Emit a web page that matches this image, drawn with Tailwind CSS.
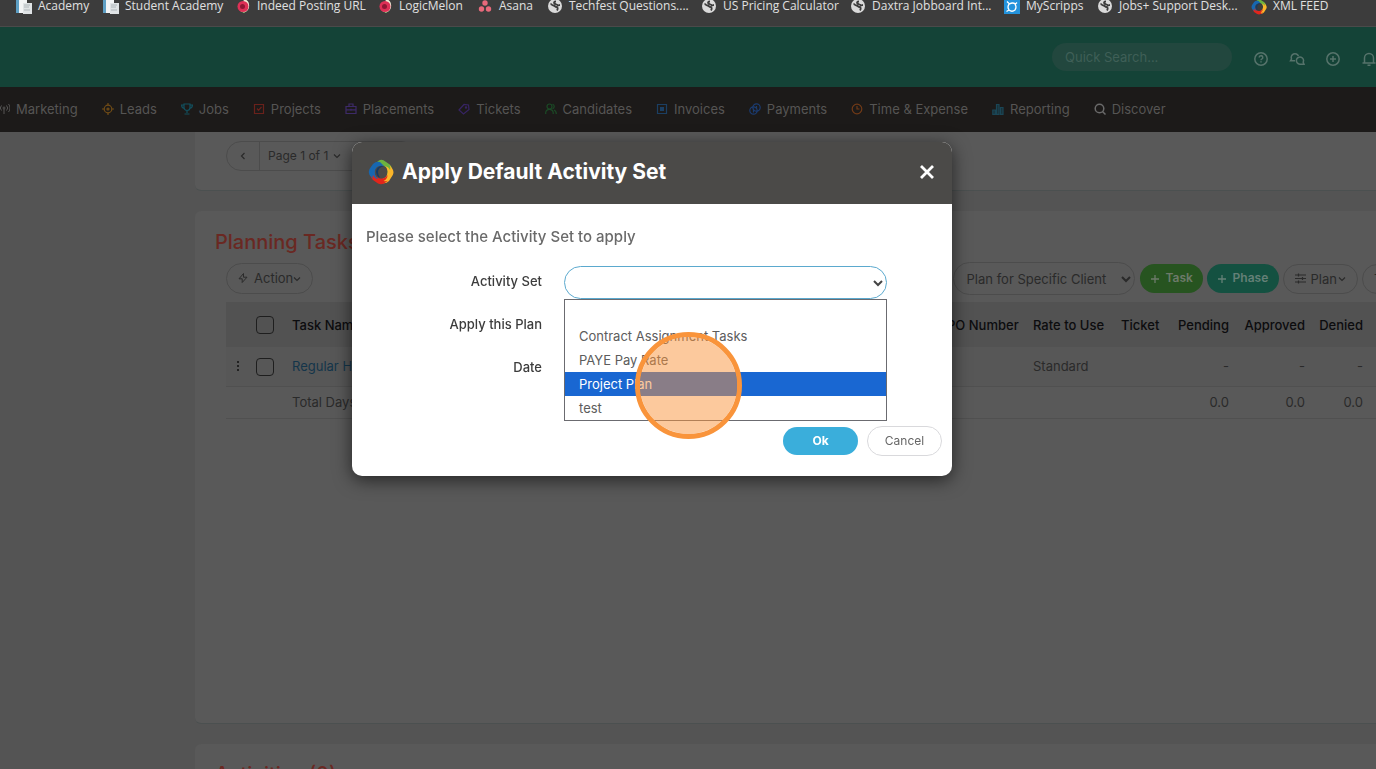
<!DOCTYPE html>
<html lang="en">
<head>
  <meta charset="UTF-8" />
  <meta name="viewport" content="width=device-width, initial-scale=1.0" />
  <title>Planning Tasks</title>
  <script src="https://cdn.jsdelivr.net/npm/@tailwindcss/browser@4"></script>
</head>
<body class="h-screen overflow-hidden flex flex-col bg-[#545454] font-['Inter',sans-serif] text-[13px] leading-5 text-[#2a2a2a]">

  <!-- shared icon shapes -->
  <svg class="hidden" aria-hidden="true">
    <symbol id="page" viewBox="0 0 16 16">
      <path d="M0 0h6v14H0z" fill="#5e9fc4" /><path d="M3 0h8v14H3z" fill="#f2f4f5" /><path d="M7 4h9v11H7z" fill="#dfe3e5" />
      <path d="M8 6h6M8 8h5M8 11h6" stroke="#aeb6ba" />
    </symbol>
    <symbol id="melon" viewBox="0 0 16 16">
      <path d="M10 0a8 8 0 0 1-1 14l-4-2z" fill="#5f9a45" /><path d="M9 0a7 7 0 0 1 0 13.500l-3-1z" fill="#f1ead6" />
      <circle cx="8" cy="7.500" r="5.500" fill="#dd3056" /><circle cx="7.500" cy="7.500" r="2.500" fill="#8e1734" />
    </symbol>
    <symbol id="globe" viewBox="0 0 16 16">
      <circle cx="8" cy="7" r="7" fill="#dadada" />
      <path d="M3.500 5c1 0 1.500 1.500 3 1.500S8 8 9.500 8s1.500 2 .5 3.500M9 2.500c-2 0-2.500 1-1.500 2s2 .5 3 1.500 1.500 0 2.500 0" fill="none" stroke="#3c3c3c" stroke-width="1.800" />
    </symbol>
    <symbol id="swirl" viewBox="0 0 26 26">
      <path d="M5 6 11 1.500q2-1.200 4.500-.2L21 5q3 2 3 6l-5 5q2-7-3-9-6-3-9 1z" fill="#6cb33f" />
      <path d="M21 5l3.500 5q1.800 3 .3 6L21 22q-3 3-7 2l-4-4q7 1 9-4 2-6-2-9 4 1 5 4 1-3-1-6z" fill="#fbb62a" />
      <path d="M21 21l-5 3.500q-3 1.500-6 0L5 21q-3-3-2.500-7l4-4q-1 7 4 9 6 2 9-3 0 4-4 6 3 1 5.500-1z" fill="#e1251b" />
      <path d="M5 20l-3.500-4q-1.500-3 0-6L5 5q3-3 7-2l4 4q-7-1-9 4-1 6 3 9-3 0-5-4-1 2 0 4z" fill="#1767b0" />
      <path d="M8 12q1-4 5-5l3 .3q-6 1-6 6 0 3 2 5.500-4-1.500-4-6.800z" fill="#143a66" />
    </symbol>
    <symbol id="chevron" viewBox="0 0 8 8"><path d="M1 2.500 4 5.500 7 2.500" fill="none" stroke="currentColor" stroke-width="1.200" /></symbol>
  </svg>

  <!-- bookmarks bar -->
  <nav aria-label="Bookmarks" class="h-[27px] shrink-0 flex items-start overflow-hidden bg-[#3c3c3c] border-b border-[#4a4a4a] pl-4 font-['Open_Sans',sans-serif] text-xs leading-3 text-[#e0e0e0] whitespace-nowrap">
    <a href="#" class="w-[87px] shrink-0 flex gap-[6px]"><svg class="size-4 -mt-px shrink-0"><use href="#page" /></svg>Academy</a>
    <a href="#" class="w-[132px] shrink-0 flex gap-[6px]"><svg class="size-4 -mt-px shrink-0"><use href="#page" /></svg>Student Academy</a>
    <a href="#" class="w-[142px] shrink-0 flex gap-[6px]"><svg class="size-4 -mt-px shrink-0"><use href="#melon" /></svg>Indeed Posting URL</a>
    <a href="#" class="w-[100px] shrink-0 flex gap-[6px]"><svg class="size-4 -mt-px shrink-0"><use href="#melon" /></svg>LogicMelon</a>
    <a href="#" class="w-[70px] shrink-0 flex gap-[6px]"><svg class="size-4 -mt-px shrink-0" viewBox="0 0 16 16" fill="#e8697b"><circle cx="8" cy="4" r="2.700" /><circle cx="4.500" cy="10" r="2.700" /><circle cx="11.500" cy="10" r="2.700" /></svg>Asana</a>
    <a href="#" class="w-[154px] shrink-0 flex gap-[6px]"><svg class="size-4 -mt-px shrink-0"><use href="#globe" /></svg>Techfest Questions....</a>
    <a href="#" class="w-[149px] shrink-0 flex gap-[6px]"><svg class="size-4 -mt-px shrink-0"><use href="#globe" /></svg>US Pricing Calculator</a>
    <a href="#" class="w-[154px] shrink-0 flex gap-[6px]"><svg class="size-4 -mt-px shrink-0"><use href="#globe" /></svg>Daxtra Jobboard Int...</a>
    <a href="#" class="w-[93px] shrink-0 flex gap-[6px]"><svg class="size-4 -mt-px shrink-0" viewBox="0 0 16 16"><path d="M0 0h16v15H0z" fill="#2393dc" /><path d="M3 2.500 5.500 5q3-2 6 0L13 3.500M5 5q-2 3 0 6 3 2.500 6 0 2-3 0-6M2.500 12.500 5 11" fill="none" stroke="#fff" stroke-width="1.300" /></svg>MyScripps</a>
    <a href="#" class="w-[154px] shrink-0 flex gap-[6px]"><svg class="size-4 -mt-px shrink-0"><use href="#globe" /></svg>Jobs+ Support Desk...</a>
    <a href="#" class="shrink-0 flex gap-[6px]"><svg class="size-4 -mt-px shrink-0"><use href="#swirl" /></svg>XML FEED</a>
  </nav>

  <!-- app header -->
  <header class="h-[60px] shrink-0 flex items-center justify-end gap-[22px] bg-[#144337] text-[#56736b]">
    <input type="search" aria-label="Quick Search" placeholder="Quick Search..." class="w-[180px] h-7 rounded-full bg-[#22473e] px-[13px] text-[13px] placeholder:text-[#3f5f57] outline-none" />
    <button aria-label="Help"><svg class="size-[14px] mt-1" viewBox="0 0 14 14" fill="none" stroke="currentColor" stroke-width="1.500"><circle cx="7" cy="7" r="6.200" /><path d="M5.200 5.500a1.800 1.800 0 1 1 2.500 1.600q-.7.300-.7 1.200M7 9.300v1.300" /></svg></button>
    <button aria-label="Messages"><svg class="size-[14px] mt-1 overflow-visible" viewBox="0 0 14 14" fill="none" stroke="currentColor" stroke-width="1.500"><path d="M5 8.800H.5l1-1.800A3.800 3.800 0 1 1 8.500 4" /><path d="M14 12.200H9.800a3.600 3.600 0 1 1 3.400-2z" /></svg></button>
    <button aria-label="Add"><svg class="size-[14px] mt-1" viewBox="0 0 14 14" fill="none" stroke="currentColor" stroke-width="1.500"><circle cx="7" cy="7" r="6.200" /><path d="M7 4v6M4 7h6" /></svg></button>
    <button aria-label="Notifications"><svg class="size-[14px] mt-1" viewBox="0 0 14 14" fill="none" stroke="currentColor" stroke-width="1.500"><path d="M.5 11h13M2.500 11V6a4.500 4.500 0 0 1 9 0v5M5.500 13.300h3" /></svg></button>
  </header>

  <!-- main navigation -->
  <nav aria-label="Main" class="h-[45px] shrink-0 flex items-center gap-6 overflow-hidden bg-[#1c1a19] text-[#565554] whitespace-nowrap pb-[2px]">
    <a href="#" class="flex items-center gap-[6px] -ml-[2px]"><svg class="size-3" viewBox="0 0 12 12" fill="none" stroke="currentColor"><circle cx="6" cy="5" r="1" /><path d="M6 6v5M3.500 7.500a3.500 3.500 0 0 1 0-5M8.500 7.500a3.500 3.500 0 0 0 0-5M1.500 9a6 6 0 0 1 0-8M10.500 9a6 6 0 0 0 0-8" /></svg>Marketing</a>
    <a href="#" class="flex items-center gap-[6px]"><svg class="size-3 text-[#714c16]" viewBox="0 0 12 12" fill="none" stroke="currentColor" stroke-width="1.200"><circle cx="6" cy="6" r="3.800" /><circle cx="6" cy="6" r="1" /><path d="M6 0v2.500M6 9.500V12M0 6h2.500M9.500 6H12" /></svg>Leads</a>
    <a href="#" class="flex items-center gap-[6px]"><svg class="size-3 text-[#12505f]" viewBox="0 0 12 12" fill="none" stroke="currentColor" stroke-width="1.200"><path d="M3 1h6v3.500a3 3 0 0 1-6 0zM3 2H.6q0 3 2.600 3.500M9 2h2.400q0 3-2.600 3.500M6 7.500V10M3.500 11h5" /></svg>Jobs</a>
    <a href="#" class="flex items-center gap-[6px]"><svg class="size-3 text-[#6a211b]" viewBox="0 0 12 12" fill="none" stroke="currentColor" stroke-width="1.200"><path d="M1.500 1.500h9v9h-9zM4 5.500l1.500 1.800L8.500 4" /></svg>Projects</a>
    <a href="#" class="flex items-center gap-[6px]"><svg class="size-3 text-[#3d2a68]" viewBox="0 0 12 12" fill="none" stroke="currentColor" stroke-width="1.200"><path d="M1 3.500h10v7H1zM4 3.500V1h4v2.500M1 6.800h10M6 5.800v2" /></svg>Placements</a>
    <a href="#" class="flex items-center gap-[6px]"><svg class="size-3 text-[#372463]" viewBox="0 0 12 12" fill="none" stroke="currentColor" stroke-width="1.200"><path d="M1 7 6 1.500l4.500.5.500 4.500L5.500 11z" /><circle cx="8" cy="4.500" r=".6" /></svg>Tickets</a>
    <a href="#" class="flex items-center gap-[6px]"><svg class="size-3 text-[#1b4a26]" viewBox="0 0 12 12" fill="none" stroke="currentColor" stroke-width="1.200"><circle cx="4.500" cy="3.500" r="2.500" /><path d="M.7 11V9.500a3.800 3.800 0 0 1 7.500 0V11M7.500 1.200a2.400 2.400 0 0 1 0 4.600M9 7q2.300 1 2.300 4" /></svg>Candidates</a>
    <a href="#" class="flex items-center gap-[6px]"><svg class="size-3 text-[#1b3f63]" viewBox="0 0 12 12" fill="none" stroke="currentColor" stroke-width="1.200"><path d="M1.500 1.500h9v9h-9z" /><path d="M4 4h4v4H4z" fill="currentColor" stroke="none" /></svg>Invoices</a>
    <a href="#" class="flex items-center gap-[6px]"><svg class="size-3 text-[#1b3b70]" viewBox="0 0 12 12" fill="none" stroke="currentColor" stroke-width="1.200"><circle cx="7.500" cy="4.500" r="3.700" /><circle cx="4.500" cy="7.500" r="3.700" /><path d="M4.500 5.500v4M7.500 3v3" /></svg>Payments</a>
    <a href="#" class="flex items-center gap-[6px]"><svg class="size-3 text-[#713a17]" viewBox="0 0 12 12" fill="none" stroke="currentColor" stroke-width="1.200"><circle cx="6" cy="6" r="4.800" /><path d="M6 3v3h2.500" /></svg>Time &amp; Expense</a>
    <a href="#" class="flex items-center gap-[6px]"><svg class="size-3 text-[#1a4656]" viewBox="0 0 12 12" fill="currentColor" fill-opacity=".5" stroke="currentColor" stroke-width="1.200"><path d="M.8 7h2.500v4.300H.8zM4.500 1.500H7v9.800H4.500zM8.500 4.500H11v6.800H8.500z" /></svg>Reporting</a>
    <a href="#" class="flex items-center gap-[6px]"><svg class="size-3 text-[#6a6a6a]" viewBox="0 0 12 12" fill="none" stroke="currentColor" stroke-width="1.500"><circle cx="5.500" cy="5.500" r="4.300" /><path d="m8.500 8.500 3 3" /></svg>Discover</a>
  </nav>

  <main class="flex-1 min-h-0 overflow-hidden ml-[195px] flex flex-col gap-5">
    <section class="shrink-0 bg-[#595959] rounded-bl-md border-b border-[#4b5050] pt-[9px] pb-[19px] pl-[31px]">
      <div class="flex w-[190px] h-[30px] text-xs border border-[#4c4c4c] rounded-full">
        <button aria-label="Previous page" class="w-[33px] flex items-center justify-center border-r border-[#4c4c4c]"><svg class="size-2 rotate-90"><use href="#chevron" /></svg></button>
        <button class="flex-1 pl-2 flex items-center gap-[5px] border-r border-[#4c4c4c]">Page 1 of 1 <svg class="size-2"><use href="#chevron" /></svg></button>
        <button aria-label="Next page" class="w-[33px] flex items-center justify-center"><svg class="size-2 -rotate-90"><use href="#chevron" /></svg></button>
      </div>
    </section>

    <section class="h-[513px] shrink-0 bg-[#595959] rounded-l-md border-b border-[#4b5050] pt-[17px]">
      <h2 class="pl-5 text-xl leading-7 font-medium text-[#6a2822]">Planning Tasks</h2>
      <div class="flex items-center pl-[31px] pt-[6px] gap-1 whitespace-nowrap">
        <button class="h-[31px] mr-auto px-[11px] pb-px flex items-center border border-[#4c4c4c] rounded-full"><svg class="size-[10px] mr-[6px]" viewBox="0 0 10 10" fill="none" stroke="currentColor"><path d="M5.500.5 1 5.800h3.200v3.700L9 4.200H5.500z" /></svg>Action<svg class="size-2 mt-px"><use href="#chevron" /></svg></button>
        <label for="planFor" class="sr-only">Plan for</label>
        <div class="relative flex items-center">
          <select id="planFor" class="appearance-none w-[182px] h-[33px] border border-[#4c4c4c] rounded-full pl-[13px]">
            <option>Plan for Specific Client</option>
          </select>
          <svg class="absolute right-1 size-[10px]" viewBox="0 0 10 10" fill="none" stroke="currentColor" stroke-width="2"><path d="M1 3l4 4 4-4" /></svg>
        </div>
        <button class="h-[29px] w-[63px] pl-[11px] pb-px ml-px flex items-center gap-[7px] rounded-full bg-[#275420] text-xs text-[#6d7a6a] font-semibold"><svg class="size-2 mt-px" viewBox="0 0 8 8" stroke="currentColor" stroke-width="1.300"><path d="M4 0v8M0 4h8" /></svg>Task</button>
        <button class="h-[29px] w-[72px] pl-[11px] pb-px flex items-center gap-[7px] rounded-full bg-[#145141] text-xs text-[#648077] font-semibold"><svg class="size-2 mt-px" viewBox="0 0 8 8" stroke="currentColor" stroke-width="1.300"><path d="M4 0v8M0 4h8" /></svg>Phase</button>
        <button class="h-[30px] px-[11px] flex items-center border border-[#4c4c4c] rounded-full"><svg class="size-[11px] mr-[5px]" viewBox="0 0 11 11" fill="none" stroke="currentColor" stroke-width="1.200"><path d="M0 2h11M0 5.500h11M0 9h11M3.500.5v3M7.500 4v3M3.500 7.500v3" /></svg>Plan<svg class="size-2 ml-px"><use href="#chevron" /></svg></button>
        <button class="h-[30px] w-[70px] -mr-14 pl-[11px] flex items-center border border-[#4c4c4c] rounded-full">Tools</button>
      </div>

      <div class="pl-[31px] pt-[7px]">
        <table class="w-full table-fixed text-left whitespace-nowrap">
          <colgroup>
            <col class="w-[24px]" /><col class="w-[30px]" /><col /><col class="w-[86px]" /><col class="w-[88px]" /><col class="w-[58px]" /><col class="w-[50px]" /><col class="w-[76px]" /><col class="w-[71px]" />
          </colgroup>
          <thead>
            <tr class="h-[45px] bg-[#525252] text-[#0c0c0e]">
              <th></th>
              <th><input type="checkbox" aria-label="Select all tasks" class="appearance-none block mt-px ml-[6px] size-[18px] border border-[#1e1e1e] rounded-sm" /></th>
              <th class="pl-3 font-medium">Task Name</th>
              <th class="font-medium">PO Number</th>
              <th class="font-medium">Rate to Use</th>
              <th class="font-medium">Ticket</th>
              <th class="font-medium"><div class="flex justify-end">Pending</div></th>
              <th class="text-right font-medium">Approved</th>
              <th class="text-right pr-[13px] font-medium">Denied</th>
            </tr>
          </thead>
          <tbody>
            <tr class="h-[39px] bg-[#575757] border-b border-[#505050]">
              <td><button aria-label="Row menu" class="flex ml-[10px]"><svg class="w-1 h-3" viewBox="0 0 4 12" fill="#222"><path d="M1 1h2v2H1zM1 5h2v2H1zM1 9h2v2H1z" /></svg></button></td>
              <td><input type="checkbox" aria-label="Select Regular Hours" class="appearance-none block mt-px ml-[6px] size-[18px] border border-[#1e1e1e] rounded-sm" /></td>
              <td class="pl-3"><a href="#" class="text-[#14354a]">Regular Hours</a></td>
              <td></td>
              <td>Standard</td>
              <td></td>
              <td class="text-right">-</td>
              <td class="text-right">-</td>
              <td class="text-right pr-[13px]">-</td>
            </tr>
            <tr class="h-8 border-b border-[#505050]">
              <td></td>
              <td></td>
              <td class="pl-3">Total Days</td>
              <td></td>
              <td></td>
              <td></td>
              <td class="text-right">0.0</td>
              <td class="text-right">0.0</td>
              <td class="text-right pr-[13px]">0.0</td>
            </tr>
          </tbody>
        </table>
      </div>
    </section>

    <section class="shrink-0 bg-[#595959] rounded-tl-md pt-4 pl-5">
      <h2 class="text-xl leading-7 font-medium text-[#6a2822]">Activities (0)</h2>
    </section>
  </main>

  <!-- modal -->
  <div class="fixed inset-0 flex justify-center items-start pt-[142px] pr-[72px]">
    <div role="dialog" aria-labelledby="dialogTitle" class="w-[600px] bg-white rounded-[10px] shadow-[0_4px_18px_rgba(0,0,0,0.6)]">
      <div class="h-[62px] flex items-center bg-[#4b4a48] rounded-t-[10px] pl-4 pr-[18px] pb-[2px] text-white">
        <svg class="size-[26px] mr-2"><use href="#swirl" /></svg>
        <h1 id="dialogTitle" class="text-[21px] leading-7 font-bold">Apply Default Activity Set</h1>
        <button aria-label="Close" class="ml-auto"><svg class="size-[14px]" viewBox="0 0 14 14" stroke="currentColor" stroke-width="2.800"><path d="M1 1l12 12M13 1 1 13" /></svg></button>
      </div>
      <form class="px-[10px] pt-[23px] pb-5">
        <p class="pl-1 text-[15px] font-medium text-[#6a6a6a]">Please select the Activity Set to apply</p>
        <div class="mt-[19px] flex">
          <div class="w-[180px] flex flex-col gap-[23px] pt-[5px] text-right font-medium text-[#3c3c3c]">
            <label for="activitySet">Activity Set</label>
            <p>Apply this Plan</p>
            <p>Date</p>
          </div>
          <div class="relative ml-[22px] w-[323px] h-[160px]">
            <select id="activitySet" class="appearance-none block w-full h-[33px] border border-[#5ba9ce] rounded-full bg-white">
              <option></option>
            </select>
            <svg class="absolute right-1 top-3 size-[10px] text-[#444]" viewBox="0 0 10 10" fill="none" stroke="currentColor" stroke-width="2"><path d="M1 3l4 4 4-4" /></svg>
            <ul role="listbox" aria-label="Activity Set" class="absolute top-[33px] inset-x-0 border border-[#6b6b70] bg-white text-[#5c5c5c] leading-6">
              <li role="option" class="h-6 px-[14px]"></li>
              <li role="option" class="h-6 px-[14px]">Contract Assignment Tasks</li>
              <li role="option" class="h-6 px-[14px]">PAYE Pay Rate</li>
              <li role="option" aria-selected="true" class="h-6 px-[14px] bg-[#1967d2] text-white">Project Plan</li>
              <li role="option" class="h-6 px-[14px]">test</li>
            </ul>
            <!-- click marker -->
            <div class="absolute left-[71px] top-[66px] size-[107px] rounded-full border-[5px] border-[#f9943b] bg-[#f9943b]/50 bg-clip-padding"></div>
          </div>
        </div>
        <div class="flex justify-end items-center gap-[9px] text-xs">
          <button type="submit" class="w-[75px] h-7 rounded-full bg-[#3aaedb] text-white font-bold">Ok</button>
          <button type="button" class="w-[75px] h-[30px] rounded-full border border-[#d9d9dc] text-[#666]">Cancel</button>
        </div>
      </form>
    </div>
  </div>

</body>
</html>
